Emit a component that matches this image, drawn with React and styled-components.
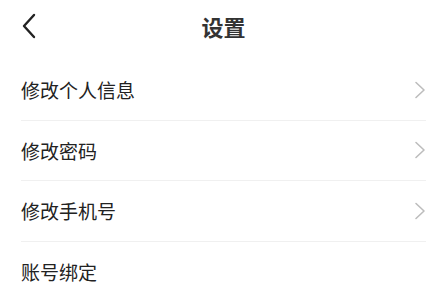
import React from 'react'
import styled, { createGlobalStyle } from 'styled-components'

const GlobalStyle = createGlobalStyle`
   * { box-sizing: border-box; }
   body {
      margin: 0;
      background: #ffffff;
      font-family: "Noto Sans CJK SC", "Noto Sans", sans-serif;
   }
`

const items = [
   { label: '修改个人信息', arrow: true },
   { label: '修改密码', arrow: true },
   { label: '修改手机号', arrow: true },
   { label: '账号绑定', arrow: false },
]

const BackIcon = () => (
   <svg width="16" height="26" viewBox="0 0 16 26" fill="none">
      <path d="M13 2 L3 13 L13 24" stroke="#222" strokeWidth="2.4" strokeLinecap="round" strokeLinejoin="round" />
   </svg>
)

const ArrowIcon = () => (
   <svg width="12" height="18" viewBox="0 0 12 18" fill="none">
      <path d="M2 1.5 L10 9 L2 16.5" stroke="#bdbdbd" strokeWidth="1.6" strokeLinecap="round" strokeLinejoin="round" />
   </svg>
)

const App = () => {
   return (
      <Page>
         <GlobalStyle />
         <Header>
            <BackButton>
               <BackIcon />
            </BackButton>
            <Title>设置</Title>
         </Header>
         <List>
            {items.map((item) => (
               <Row key={item.label}>
                  <Label>{item.label}</Label>
                  {item.arrow && <ArrowIcon />}
               </Row>
            ))}
         </List>
      </Page>
   )
}

const Page = styled.div`
   width: 439px;
   height: 303px;
   overflow: hidden;
   background: #fff;
`
const Header = styled.div`
   position: relative;
   height: 51px;
   padding-left: 8px;
   display: flex;
   align-items: center;
   justify-content: center;
`
const BackButton = styled.div`
   position: absolute;
   left: 21px;
   top: 13px;
   display: flex;
`
const Title = styled.h1`
   margin: 0;
   font-size: 22px;
   font-weight: 700;
   color: #333;
   line-height: 1;
`
const List = styled.div`
   margin-top: 9px;
   padding: 0 13px 0 21px;
   display: flex;
   flex-direction: column;
`
const Row = styled.div`
   height: 60.5px;
   display: flex;
   align-items: center;
   justify-content: space-between;
   border-bottom: 1px solid #f0f0f0;
   &:last-child {
      border-bottom: none;
   }
`
const Label = styled.span`
   font-size: 19px;
   color: #222;
   line-height: 1;
`

export default App
